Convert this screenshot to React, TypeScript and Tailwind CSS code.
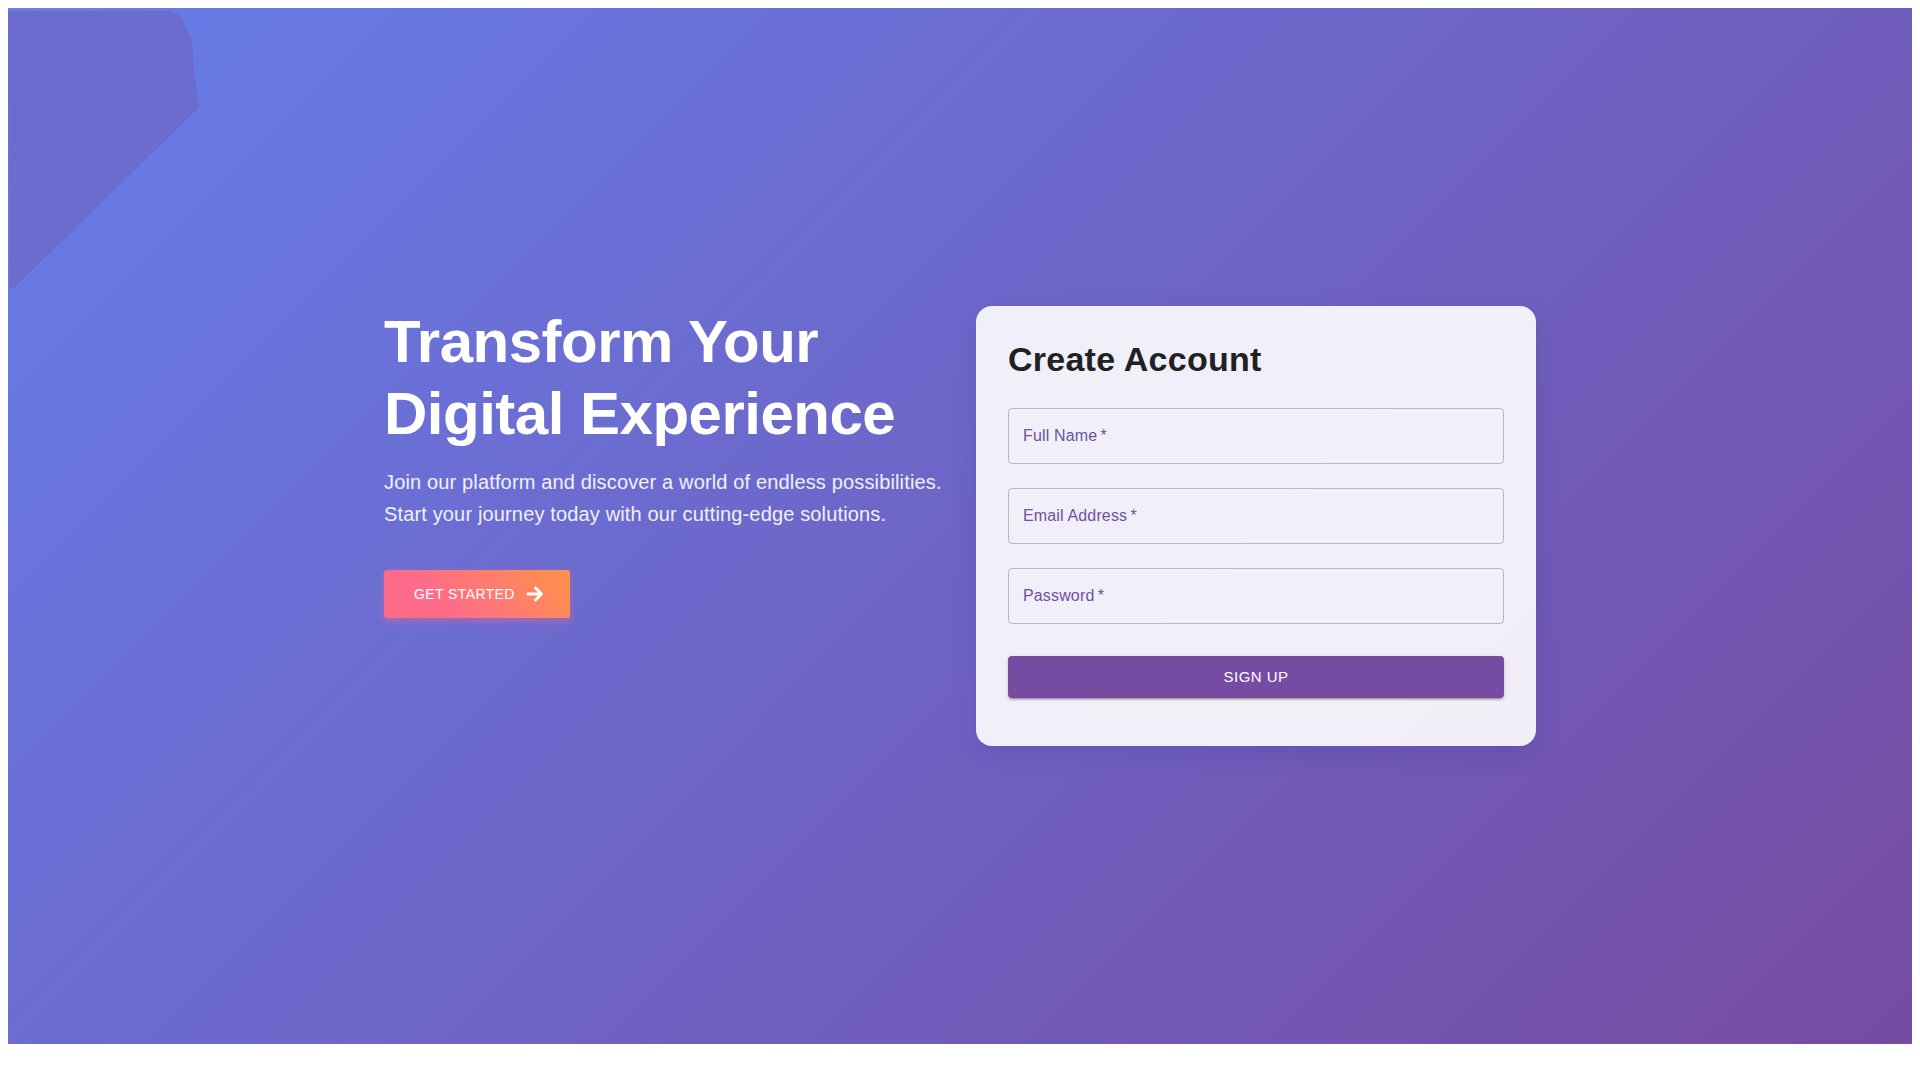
import { useState } from "react";

function ArrowForward() {
  return (
    <svg
      viewBox="0 0 24 24"
      className="ml-2 h-6 w-6"
      fill="none"
      stroke="currentColor"
      strokeWidth={3}
      strokeLinecap="round"
      strokeLinejoin="round"
      aria-hidden="true"
    >
      <path d="M5 12h13M12.5 6l6 6-6 6" />
    </svg>
  );
}

function Field({ label, type = "text" }: { label: string; type?: string }) {
  return (
    <div className="mt-4 mb-2 flex flex-col">
      <input
        type={type}
        placeholder={`${label}\u2009*`}
        className="h-14 w-full rounded border border-black/[0.23] bg-transparent px-3.5 text-base leading-[23px] tracking-[0.15px] text-[#212121] placeholder:text-[#6f51a0] focus:border-[#764ba2] focus:outline-none"
      />
    </div>
  );
}

export default function App() {
  const [sent, setSent] = useState(false);

  return (
    <div className="bg-white p-2 font-['Liberation_Sans',Arial,sans-serif]">
      <div className="relative flex h-[1036px] items-center justify-center overflow-hidden bg-[linear-gradient(135deg,#667eea_0%,#764ba2_100%)]">
        {/* leftover decoration in the corner */}
        <svg className="absolute top-0 left-0 h-[290px] w-[200px]" viewBox="0 0 200 290" aria-hidden="true">
          <polygon
            points="0,3 160,3 172,7 179,22 184,32 186,64 191,99 5,281 1,280"
            fill="#6c6bcf"
          />
        </svg>

        <div className="relative w-[1200px] px-6">
          <div className="grid grid-cols-2 items-start gap-8">
            {/* Left: hero copy */}
            <div>
              <h1 className="mb-4 text-[60px] leading-[72px] font-bold tracking-[-0.5px] text-white">
                Transform Your
                <br />
                Digital Experience
              </h1>
              <p className="mb-10 text-[20px] leading-8 tracking-[0.15px] text-white/90">
                Join our platform and discover a world of endless possibilities.
                <br />
                Start your journey today with our cutting-edge solutions.
              </p>
              <button className="flex h-12 items-center rounded-[3px] bg-[linear-gradient(45deg,#FE6B8B_30%,#FF8E53_90%)] pr-[23px] pl-[30px] text-sm leading-6 font-medium tracking-[0.4px] text-white uppercase shadow-[0_3px_5px_2px_rgba(255,105,135,0.3)]">
                Get Started
                <ArrowForward />
              </button>
            </div>

            {/* Right: sign up card */}
            <div className="flex flex-col rounded-2xl bg-white/90 p-8 shadow-[0_8px_24px_rgba(31,38,135,0.15)]">
              <h2 className="mb-3 text-[34px] leading-[42px] font-bold tracking-[0.25px] text-[#212121]">
                Create Account
              </h2>
              <form
                className="flex flex-col"
                onSubmit={(e) => {
                  e.preventDefault();
                  setSent(true);
                }}
              >
                <Field label="Full Name" />
                <Field label="Email Address" type="email" />
                <Field label="Password" type="password" />
                <button
                  type="submit"
                  className="mt-6 mb-4 h-[42px] w-full rounded bg-[#764ba2] text-[15px] leading-[26px] font-medium tracking-[0.46px] text-white uppercase shadow-[0_3px_1px_-2px_rgba(0,0,0,0.2),0_2px_2px_0_rgba(0,0,0,0.14),0_1px_5px_0_rgba(0,0,0,0.12)]"
                >
                  {sent ? "Sign Up" : "Sign Up"}
                </button>
              </form>
            </div>
          </div>
        </div>
      </div>
    </div>
  );
}
